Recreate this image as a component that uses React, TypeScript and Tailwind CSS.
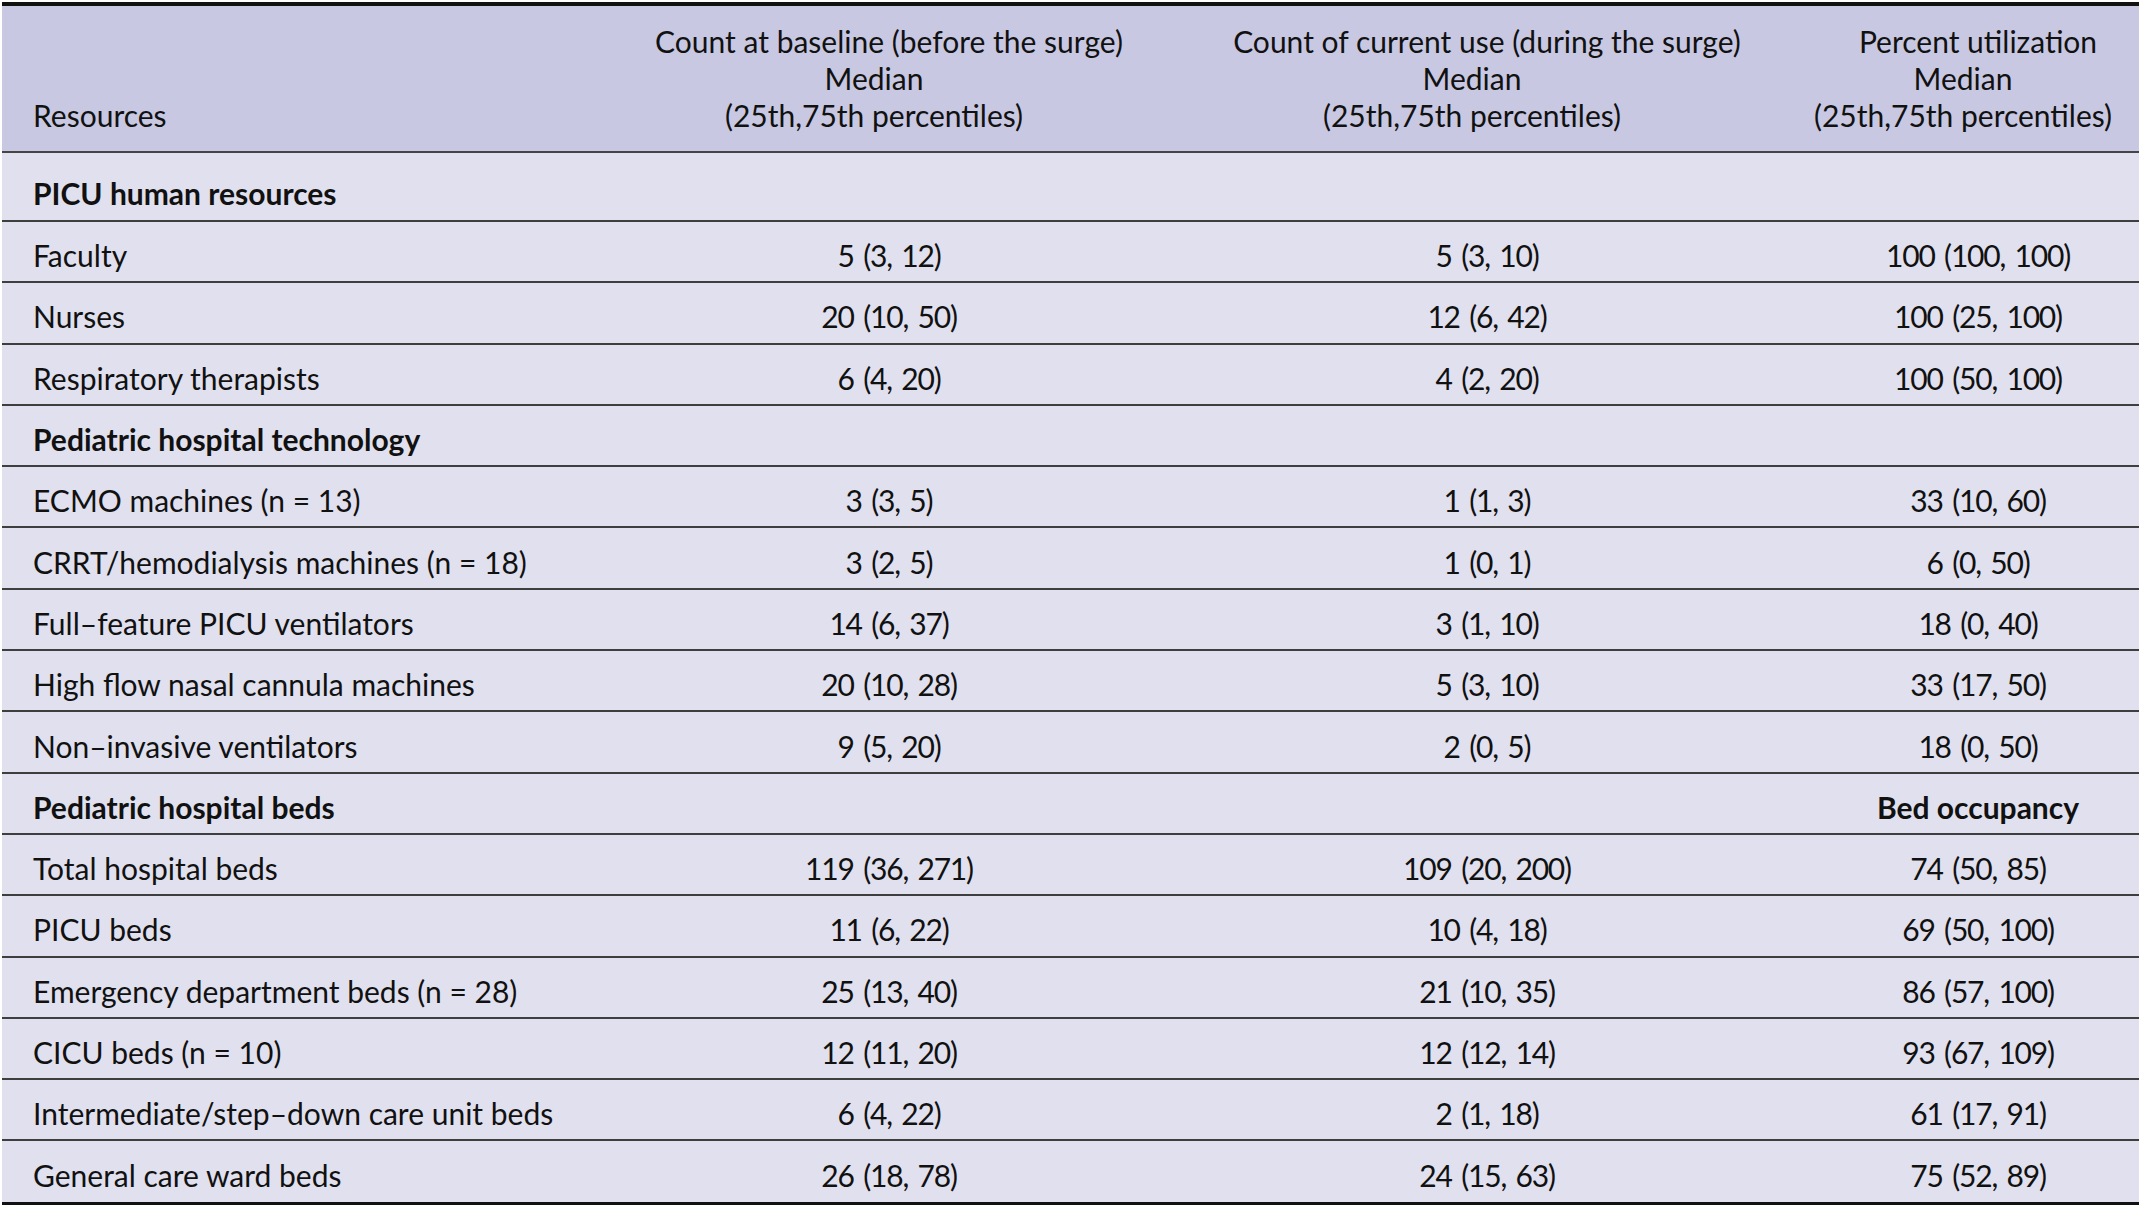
import React from "react";

type Row = { label: string; a: string; b: string; c: string; section?: boolean };

const rows: Row[] = [
  { label: "PICU human resources", a: "", b: "", c: "", section: true },
  { label: "Faculty", a: "5 (3, 12)", b: "5 (3, 10)", c: "100 (100, 100)" },
  { label: "Nurses", a: "20 (10, 50)", b: "12 (6, 42)", c: "100 (25, 100)" },
  { label: "Respiratory therapists", a: "6 (4, 20)", b: "4 (2, 20)", c: "100 (50, 100)" },
  { label: "Pediatric hospital technology", a: "", b: "", c: "", section: true },
  { label: "ECMO machines (n = 13)", a: "3 (3, 5)", b: "1 (1, 3)", c: "33 (10, 60)" },
  { label: "CRRT/hemodialysis machines (n = 18)", a: "3 (2, 5)", b: "1 (0, 1)", c: "6 (0, 50)" },
  { label: "Full–feature PICU ventilators", a: "14 (6, 37)", b: "3 (1, 10)", c: "18 (0, 40)" },
  { label: "High flow nasal cannula machines", a: "20 (10, 28)", b: "5 (3, 10)", c: "33 (17, 50)" },
  { label: "Non–invasive ventilators", a: "9 (5, 20)", b: "2 (0, 5)", c: "18 (0, 50)" },
  { label: "Pediatric hospital beds", a: "", b: "", c: "Bed occupancy", section: true },
  { label: "Total hospital beds", a: "119 (36, 271)", b: "109 (20, 200)", c: "74 (50, 85)" },
  { label: "PICU beds", a: "11 (6, 22)", b: "10 (4, 18)", c: "69 (50, 100)" },
  { label: "Emergency department beds (n = 28)", a: "25 (13, 40)", b: "21 (10, 35)", c: "86 (57, 100)" },
  { label: "CICU beds (n = 10)", a: "12 (11, 20)", b: "12 (12, 14)", c: "93 (67, 109)" },
  { label: "Intermediate/step–down care unit beds", a: "6 (4, 22)", b: "2 (1, 18)", c: "61 (17, 91)" },
  { label: "General care ward beds", a: "26 (18, 78)", b: "24 (15, 63)", c: "75 (52, 89)" },
];

const cols = "grid grid-cols-[619px_536px_660px_322px]";
const num = "text-center tracking-[-0.04em] [word-spacing:3px]";

const HeadCell = ({ title }: { title: string }) => (
  <div className="flex flex-col items-center whitespace-nowrap">
    <span>{title}</span>
    <span className="mr-[30px]">Median</span>
    <span className="mr-[30px]">(25th,75th percentiles)</span>
  </div>
);

export default function App() {
  return (
    <div className="min-h-screen bg-white pt-[2px] pl-[2px] font-['Lato',sans-serif] text-[30px] text-[#111]">
      <div className="w-[2137px]">
        <div className={`${cols} border-t-[4px] border-b-2 border-t-[#111] border-b-[#454545] bg-[#c8c8e2] pt-[17px] pb-[17px] leading-[37px]`}>
          <div className="self-end pl-[31px]">Resources</div>
          <HeadCell title="Count at baseline (before the surge)" />
          <HeadCell title="Count of current use (during the surge)" />
          <HeadCell title="Percent utilization" />
        </div>
        {rows.map((r, i) => {
          const first = i === 0;
          const last = i === rows.length - 1;
          return (
            <div
              key={r.label}
              className={`${cols} items-center bg-[#e0e0ee] ${
                last ? "h-[64px] border-b-[3px] border-[#111]" : "border-b-2 border-[#3e3e3e]"
              } ${first ? "h-[69px] pt-[14px]" : last ? "pt-[8px]" : "h-[61.3px] pt-[8px]"}`}
            >
              <div className={`pl-[31px] ${r.section ? "font-bold" : ""}`}>{r.label}</div>
              <div className={num}>{r.a}</div>
              <div className={num}>{r.b}</div>
              <div className={r.section ? "text-center font-bold" : num}>{r.c}</div>
            </div>
          );
        })}
      </div>
    </div>
  );
}
